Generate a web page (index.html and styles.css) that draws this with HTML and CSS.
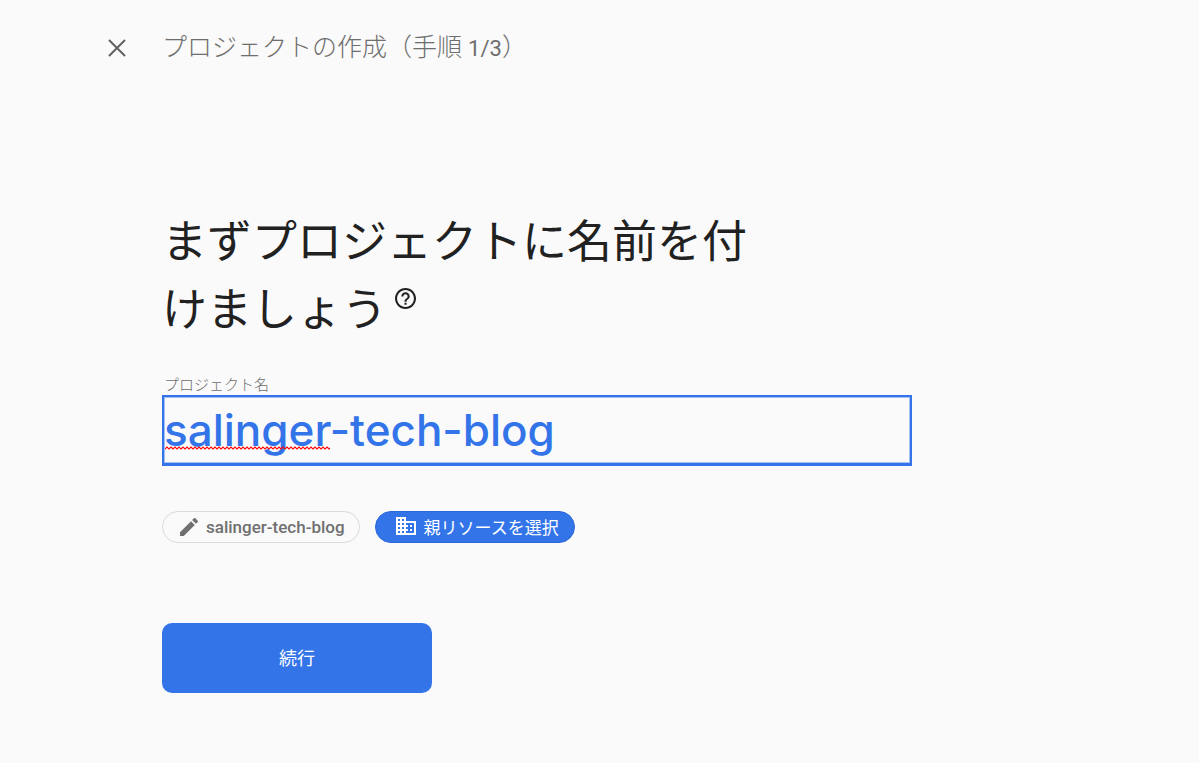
FILE: index.html
```html
<!DOCTYPE html>
<html lang="ja">
<head>
<meta charset="utf-8">
<meta name="viewport" content="width=device-width, initial-scale=1">
<title>プロジェクトの作成</title>
<link rel="stylesheet" href="styles.css">
</head>
<body>
<header class="topbar">
  <button class="close" type="button" aria-label="閉じる">
    <svg viewBox="0 0 18 18" width="18" height="18"><path d="M1 1L17 17M17 1L1 17" fill="none" stroke="currentColor" stroke-width="2"/></svg>
  </button>
  <p class="step">プロジェクトの作成（手順 <span class="count">1/3</span>）</p>
</header>
<main class="content">
  <h1 class="heading">まずプロジェクトに名前を付けましょう<button class="help" type="button" aria-label="ヘルプ"><svg viewBox="2 2 20 20" width="21" height="21"><path fill="currentColor" d="M11 18h2v-2h-2v2zm1-16C6.480 2 2 6.480 2 12s4.480 10 10 10 10-4.480 10-10S17.520 2 12 2zm0 18c-4.410 0-8-3.590-8-8s3.590-8 8-8 8 3.590 8 8-3.590 8-8 8zm0-14c-2.210 0-4 1.790-4 4h2c0-1.100.9-2 2-2s2 .9 2 2c0 2-3 1.750-3 5h2c0-2.250 3-2.500 3-5 0-2.210-1.790-4-4-4z"/></svg></button></h1>
  <label class="label" for="name">プロジェクト名</label>
  <div class="field">
    <input class="name" id="name" type="text" value="salinger-tech-blog" spellcheck="false">
    <svg class="squiggle" width="165" height="4" aria-hidden="true">
      <defs><pattern id="wave" width="4" height="4" patternUnits="userSpaceOnUse"><path d="M-1 2L0 3L2 1L4 3L5 2" fill="none" stroke="#f00" stroke-width="1.200"/></pattern></defs>
      <rect width="165" height="4" fill="url(#wave)"/>
    </svg>
  </div>
  <div class="chips">
    <button class="chip" type="button">
      <svg viewBox="3 3 18 18" width="18" height="18"><path fill="currentColor" d="M3 17.250V21h3.750L17.810 9.940l-3.750-3.750L3 17.250zM20.710 7.040a1 1 0 0 0 0-1.410l-2.340-2.340a1 1 0 0 0-1.410 0l-1.830 1.830 3.750 3.750 1.830-1.830z"/></svg>
      <span>salinger-tech-blog</span>
    </button>
    <button class="chip chip-primary" type="button">
      <svg viewBox="2 3 20 18" width="20" height="18"><path fill="currentColor" d="M12 7V3H2v18h20V7H12zM6 19H4v-2h2v2zm0-4H4v-2h2v2zm0-4H4V9h2v2zm0-4H4V5h2v2zm4 12H8v-2h2v2zm0-4H8v-2h2v2zm0-4H8V9h2v2zm0-4H8V5h2v2zm10 12h-8v-2h2v-2h-2v-2h2v-2h-2V9h8v10zm-2-8h-2v2h2v-2zm0 4h-2v2h2v-2z"/></svg>
      <span>親リソースを選択</span>
    </button>
  </div>
  <button class="continue" type="button">続行</button>
</main>
</body>
</html>
```
FILE: styles.css
```css
* { box-sizing: border-box; }
body {
  margin: 0;
  background: #fafafa;
  color: #212121;
  font-family: Roboto, "Noto Sans CJK JP", sans-serif;
}
button { font-family: inherit; cursor: pointer; }
svg { display: block; flex: none; }
.topbar {
  display: flex;
  align-items: center;
  gap: 36px;
  padding: 28px 108px 0;
  color: #6e6e6e;
}
.close {
  padding: 0;
  border: 0;
  background: none;
  color: #616161;
}
.step {
  margin: 0;
  font-size: 25px;
  font-weight: 300;
  line-height: 40px;
}
.count {
  font-size: 22px;
  font-weight: 400;
  line-height: 1;
}
.content {
  max-width: 912px;
  padding: 141px 0 70px 162px;
}
.heading {
  max-width: 600px;
  margin: 0;
  font-size: 45px;
  font-weight: 400;
  line-height: 68px;
}
.help {
  display: inline-block;
  margin-left: 8px;
  padding: 0;
  border: 0;
  background: none;
  color: inherit;
  vertical-align: 17px;
}
.label {
  display: block;
  margin-top: 30px;
  padding-left: 2px;
  color: #6e6e6e;
  font-size: 15px;
  font-weight: 300;
  line-height: 20px;
}
.field { position: relative; }
.name {
  display: block;
  width: 100%;
  height: 71px;
  padding: 0;
  border: 2px solid #3374e9;
  border-bottom-width: 3px;
  border-radius: 0;
  outline: 0;
  background: transparent;
  box-shadow: inset 0 0 0 1px #a3c0f5;
  color: #3374e9;
  font-family: Inter, sans-serif;
  font-size: 44px;
  font-weight: 500;
}
.squiggle {
  position: absolute;
  left: 3px;
  top: 51px;
}
.chips {
  display: flex;
  flex-wrap: wrap;
  gap: 15px;
  margin-top: 45px;
}
.chip {
  display: flex;
  align-items: center;
  gap: 8px;
  height: 32px;
  padding: 0 14px 1px 17px;
  border: 1px solid #dadada;
  border-radius: 16px;
  background: transparent;
  color: #707070;
  font-size: 17px;
  font-weight: 500;
}
.chip-primary {
  gap: 8px;
  padding: 0 15px 2px 20px;
  border-color: #2b68d8;
  background: #3374e9;
  color: #fff;
  font-weight: 400;
}
.continue {
  width: 270px;
  height: 70px;
  margin-top: 80px;
  padding: 0 0 3px;
  border: 0;
  border-radius: 10px;
  background: #3374e9;
  color: #fff;
  font-size: 18px;
}
```
